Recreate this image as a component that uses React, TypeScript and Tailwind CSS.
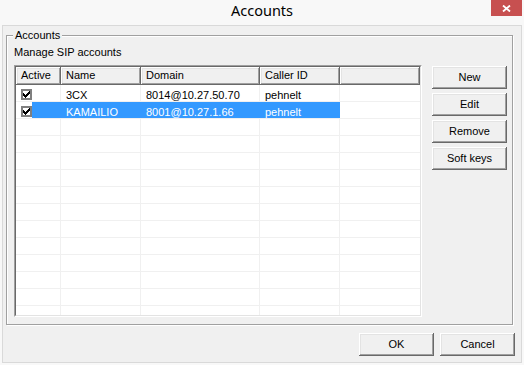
import React from "react";

const raised =
  "shadow-[inset_-1px_-1px_#696969,inset_1px_1px_#ffffff,inset_-2px_-2px_#a0a0a0,inset_2px_2px_#e3e3e3]";

function Check() {
  return (
    <div className="w-[11px] h-[11px] border-2 border-[#7f7f7f] bg-white">
      <svg width="7" height="7" viewBox="0 0 7 7" shapeRendering="crispEdges" className="block">
        <rect x="6" y="0" width="1" height="1" fill="#000" />
        <rect x="5" y="1" width="2" height="1" fill="#000" />
        <rect x="0" y="2" width="1" height="1" fill="#000" />
        <rect x="4" y="2" width="3" height="1" fill="#000" />
        <rect x="0" y="3" width="2" height="1" fill="#000" />
        <rect x="3" y="3" width="3" height="1" fill="#000" />
        <rect x="0" y="4" width="5" height="1" fill="#000" />
        <rect x="1" y="5" width="3" height="1" fill="#000" />
        <rect x="2" y="6" width="1" height="1" fill="#000" />
      </svg>
    </div>
  );
}

function Btn({ label }: { label: string }) {
  return (
    <div
      className={`w-[75px] h-[23px] flex items-center justify-center bg-[#f0f0f0] text-black ${raised}`}
    >
      {label}
    </div>
  );
}

type Row = { name: string; domain: string; caller: string; sel: boolean } | null;

function DataRow({ row }: { row: Row }) {
  const sel = row?.sel ?? false;
  const cellBg = sel ? "bg-[#3399ff] text-white border-[#3399ff]" : "border-[#f0f0f0]";
  return (
    <div className="flex h-[17px] shrink-0 border-b border-[#f0f0f0]">
      <div className={`w-[45px] flex border-r ${sel ? "border-[#3399ff]" : "border-[#f0f0f0]"}`}>
        {row ? (
          <>
            <div className="w-[16px] pl-[5px] pt-[4px] bg-white">
              <Check />
            </div>
            <div className={`flex-1 ${sel ? "bg-[#3399ff]" : ""}`} />
          </>
        ) : null}
      </div>
      <div className={`w-[80px] border-r pl-[5px] leading-[20px] whitespace-nowrap ${cellBg}`}>
        {row?.name}
      </div>
      <div className={`w-[119px] border-r pl-[5px] leading-[20px] whitespace-nowrap ${cellBg}`}>
        {row?.domain}
      </div>
      <div className={`w-[80px] border-r pl-[5px] leading-[20px] whitespace-nowrap ${cellBg}`}>
        {row?.caller}
      </div>
      <div className="flex-1" />
    </div>
  );
}

export default function App() {
  const rows: Row[] = [
    { name: "3CX", domain: "8014@10.27.50.70", caller: "pehnelt", sel: false },
    { name: "KAMAILIO", domain: "8001@10.27.1.66", caller: "pehnelt", sel: true },
  ];
  for (let i = 0; i < 12; i++) rows.push(null);

  const headers: { t: string; w: string }[] = [
    { t: "Active", w: "w-[45px]" },
    { t: "Name", w: "w-[80px]" },
    { t: "Domain", w: "w-[119px]" },
    { t: "Caller ID", w: "w-[80px]" },
    { t: "", w: "w-[80px]" },
  ];

  return (
    <div className="w-[524px] h-[365px] bg-[#f8f8f8] flex flex-col font-['Liberation_Sans',Arial,sans-serif] text-[11px] text-black overflow-hidden">
      <div className="h-[25px] shrink-0 grid grid-cols-[1fr_auto_1fr]">
        <div />
        <div className="font-['Noto_Sans',sans-serif] text-[14.5px] leading-[20px] text-black">
          Accounts
        </div>
        <div className="justify-self-end mr-[2px] w-[31px] h-[16px] bg-[#c75050] flex items-center justify-center">
          <svg width="9" height="7" viewBox="0 0 9 7" className="block">
            <path d="M1 0.5 L8 6.5 M8 0.5 L1 6.5" stroke="#ffffff" strokeWidth="1.8" fill="none" />
          </svg>
        </div>
      </div>

      <div className="mx-[2px] h-[338px] shrink-0 border border-[#d9d9d9] bg-[#f0f0f0] flex flex-col">
        <div className="relative ml-[3px] mt-[9px] w-[507px] h-[290px] border border-[#a0a0a0] shadow-[inset_1px_1px_#ffffff,1px_1px_#ffffff] pl-[7px] pt-[10px] flex flex-col">
          <span className="absolute -top-[7px] left-[6px] px-[2px] bg-[#f0f0f0] leading-[13px]">
            Accounts
          </span>
          <div className="leading-[13px] h-[13px]">Manage SIP accounts</div>
          <div className="flex mt-[6px]">
            <div className="w-[408px] h-[252px] border border-t-[#a0a0a0] border-l-[#a0a0a0] border-r-white border-b-white">
              <div className="w-full h-full border border-t-[#696969] border-l-[#696969] border-r-[#e3e3e3] border-b-[#e3e3e3] bg-white flex flex-col overflow-hidden">
                <div className="flex h-[18px] shrink-0">
                  {headers.map((h, i) => (
                    <div
                      key={i}
                      className={`${h.w} h-[18px] bg-[#f0f0f0] pl-[5px] leading-[17px] whitespace-nowrap ${raised}`}
                    >
                      {h.t}
                    </div>
                  ))}
                </div>
                {rows.map((r, i) => (
                  <DataRow key={i} row={r} />
                ))}
              </div>
            </div>
            <div className="ml-[10px] mt-[1px] flex flex-col gap-[4px]">
              <Btn label="New" />
              <Btn label="Edit" />
              <Btn label="Remove" />
              <Btn label="Soft keys" />
            </div>
          </div>
        </div>
        <div className="mt-[8px] flex justify-end gap-[6px] pr-[6px]">
          <Btn label="OK" />
          <Btn label="Cancel" />
        </div>
      </div>
    </div>
  );
}
